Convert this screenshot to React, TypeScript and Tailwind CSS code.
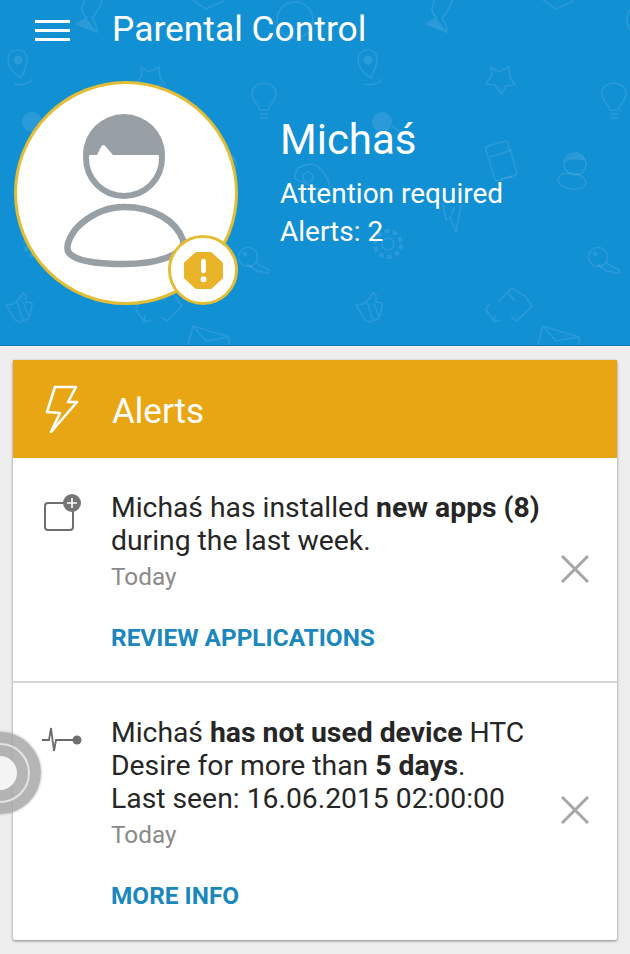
const Doodles = () => (
  <svg className="absolute inset-0" width="630" height="345" viewBox="0 0 630 345" fill="none" stroke="#fff" strokeOpacity="0.1" strokeWidth="1.6">
    <defs>
      {/* the wallpaper repeats every 350px */}
      <g id="tile">
        {/* hourglass */}
        <path d="M85 0l-3 8c-1 4 2 7 5 10-4 3-9 4-11 6l21 8c0-6-2-10-5-14 3-3 6-7 8-12l2-6" />
        <path d="M78 24l9-5 9 12z" fill="#fff" fillOpacity="0.1" stroke="none" />
        {/* pin */}
        <path d="M21 78c-7-4-13-11-13-19 0-7 6-9 10-9 6 0 9 4 9 10 0 6-3 12-6 18zM14 84c6 2 15 0 18-5" />
        <circle cx="18" cy="60" r="4.5" fill="#fff" fillOpacity="0.1" stroke="none" />
        {/* star */}
        <path d="M141 67l8 5 10-5 1 11 5 6-9 2-4 8-7-9-9-1 6-9z" />
        {/* bulb */}
        <path d="M260 110c-1-5-8-9-8-17 0-6 6-10 12-10s12 4 12 10c0 8-7 12-8 17zM260 114h8M260 118h8" />
        {/* face */}
        <circle cx="32" cy="122" r="10" fill="#fff" fillOpacity="0.1" stroke="none" />
        <path d="M42 126l10 7" />
        {/* gamepad */}
        <path d="M298 168c6-4 15-5 19-2 6 4 11 12 13 21l-3 3c-8 0-16-3-24-8-4-1-7-2-8-5 0-3 1-6 3-9z" />
        <circle cx="308" cy="177" r="5" />
        {/* phone */}
        <rect x="0" y="0" width="23" height="36" rx="3" transform="translate(135 147) rotate(-17)" />
        <path d="M140 157l22-7M151 179l11-3" />
        {/* user */}
        <circle cx="225" cy="164" r="11" />
        <path d="M215 162c2-9 18-11 20-1-6-2-14-2-20 1z" fill="#fff" fillOpacity="0.1" stroke="none" />
        <ellipse cx="222" cy="181" rx="14" ry="8" transform="rotate(10 222 181)" />
        {/* bolt */}
        <path d="M111 205l-5 27-6-15-4 3-3-17M104 207l-2 8" />
        {/* gear */}
        <circle cx="38" cy="244" r="6" />
        <circle cx="38" cy="244" r="13" strokeDasharray="5 3.2" strokeWidth="4" />
        {/* key */}
        <circle cx="248" cy="257" r="9.5" />
        <circle cx="245" cy="254" r="1.6" />
        <path d="M256 263l13 7v3h-5l-3-2-3 1-11-8" />
        {/* thumb */}
        <path d="M6 305l7-1 7-6 3-5 3 2v7l6 1-1 9-3 7-9 3-4-2z" />
        <path d="M17 302l6 18M23 302l6 14" />
        {/* arrow square */}
        <path d="M148 302l14-14 13 8 7 10-15 15-6-4M159 294l6 7" />
        <path d="M139 304c-2 3-3 5-3 6 3 5 6 8 9 12M145 315l-1 7 7-2" />
        {/* envelope */}
        <path d="M193 0l13 9 16-7 1-2" />
        <path d="M188 345l5-19 36 11 0 8M193 326l13 15 23-4" />
        {/* ring */}
        <circle cx="295" cy="20" r="18" />
      </g>
    </defs>
    <use href="#tile" />
    <use href="#tile" x="350" />
  </svg>
)

const Avatar = () => (
  <div className="relative h-[224px] w-[224px] shrink-0">
    <div className="h-full w-full rounded-full border-[3px] border-[#e2bd36] bg-white">
      <svg width="218" height="218" viewBox="3 3 218 218" fill="none">
        <circle cx="110" cy="77" r="38" stroke="#98a0a5" strokeWidth="6" fill="#fff" />
        <path d="M69 74A41 41 0 0 1 151 74H99L92 66Q89 62 87 66L83 74Z" fill="#98a0a5" />
        <path d="M110 126C140 126 162 140 169 159C172 175 140 183 110 183C85 183 62 180 55 172C50 165 58 150 68 142C80 132 95 126 110 126Z" stroke="#98a0a5" strokeWidth="6.5" fill="#fff" />
      </svg>
    </div>
    <div className="absolute bottom-0 right-0 flex h-[70px] w-[70px] items-center justify-center rounded-full border-[3px] border-[#e2bd36] bg-white">
      <svg width="39" height="37" viewBox="0 0 40 38">
        <path d="M12 0h16l12 11v16L28 38H12L0 27V11z" fill="#e9b32a" />
        <rect x="17.5" y="7" width="5" height="15" rx="2.5" fill="#fff" />
        <circle cx="20" cy="28" r="3" fill="#fff" />
      </svg>
    </div>
  </div>
)

function AppIcon() {
  return (
    <svg width="38" height="38" viewBox="0 0 38 38" fill="none">
      <rect x="1" y="10" width="28" height="27" rx="3" stroke="#6f6f6f" strokeWidth="2" />
      <circle cx="28" cy="10" r="9" fill="#757575" />
      <path d="M28 5v10M23 10h10" stroke="#fff" strokeWidth="1.6" />
    </svg>
  )
}

function PulseIcon() {
  return (
    <svg width="40" height="26" viewBox="0 0 40 26" fill="none">
      <path d="M0 13h7L9 1l3 23 2-11h20" stroke="#6a6a6a" strokeWidth="1.8" />
      <circle cx="35" cy="13" r="4.5" fill="#6f6f6f" />
    </svg>
  )
}

function CloseIcon() {
  return (
    <svg width="28" height="28" viewBox="0 0 28 28" fill="none" stroke="#a6a6a6" strokeWidth="3">
      <path d="M1 1l26 26M27 1L1 27" />
    </svg>
  )
}

export default function App() {
  return (
    <div className="relative h-[954px] w-[630px] overflow-hidden bg-[#eeeeee] font-['Roboto',sans-serif]">
      <header className="relative h-[346px] border-b border-[#1079b3] bg-[#1290d4]">
        <Doodles />
        <div className="relative flex h-[60px] items-center pl-[35px]">
          <div className="flex w-[77px] flex-col gap-[6px]">
            <span className="h-[3px] w-[35px] bg-white" />
            <span className="h-[3px] w-[35px] bg-white" />
            <span className="h-[3px] w-[35px] bg-white" />
          </div>
          <h1 className="text-[35.4px] leading-none text-white">Parental Control</h1>
        </div>
        <div className="relative mt-[21px] flex pl-[14px]">
          <Avatar />
          <div className="ml-[42px] text-white">
            <h2 className="mt-[34px] text-[42px] leading-[50px]">Michaś</h2>
            <p className="mt-[10px] text-[28px] leading-[38px]">Attention required</p>
            <p className="text-[28px] leading-[38px]">Alerts: 2</p>
          </div>
        </div>
      </header>

      <section className="mx-[13px] mt-[14px] rounded-[2px] bg-white shadow-[0_1px_3px_rgba(0,0,0,0.45)]">
        <div className="flex h-[98px] items-center bg-[#e8a615] pl-[32px]">
          <svg width="34" height="48" viewBox="0 0 34 48" fill="none" stroke="#fff" strokeWidth="2.6" strokeLinejoin="round">
            <path d="M10 2H31L23 17H32L6 47L15 28L2 27Z" />
          </svg>
          <span className="ml-[33px] pt-[7px] text-[35px] text-white">Alerts</span>
        </div>

        <article className="relative h-[225px] border-b-2 border-[#d5d5d5] pl-[98px] pt-[33px]">
          <div className="absolute left-[31px] top-[35px]"><AppIcon /></div>
          <p className="text-[28.3px] leading-[33px] text-[#262626]">
            Michaś has installed <b className="font-bold">new apps (8)</b>
            <br />during the last week.
          </p>
          <p className="mt-[4px] text-[24.3px] leading-[32px] text-[#8a8a8a]">Today</p>
          <p className="mt-[29px] text-[24.4px] font-bold leading-[32px] text-[#1a87bd]">REVIEW APPLICATIONS</p>
          <div className="absolute right-[28px] top-[97px]"><CloseIcon /></div>
        </article>

        <article className="relative h-[257px] pl-[98px] pt-[33px]">
          <div className="absolute left-[29px] top-[44px]"><PulseIcon /></div>
          <p className="text-[28.3px] leading-[33px] text-[#262626]">
            Michaś <b className="font-bold">has not used device</b> HTC
            <br />Desire for more than <b className="font-bold">5 days</b>.
            <br />Last seen: 16.06.2015 02:00:00
          </p>
          <p className="mt-[4px] text-[24.3px] leading-[32px] text-[#8a8a8a]">Today</p>
          <p className="mt-[29px] text-[24.4px] font-bold leading-[32px] text-[#1a87bd]">MORE INFO</p>
          <div className="absolute right-[28px] top-[113px]"><CloseIcon /></div>
        </article>
      </section>

      {/* floating assistive ring lying over the card */}
      <div className="absolute left-[-41px] top-[732px] flex h-[82px] w-[82px] items-center justify-center rounded-full bg-[#a8a8a8]/85 shadow-[0_0_3px_rgba(0,0,0,0.3)]">
        <div className="flex h-[60px] w-[60px] items-center justify-center rounded-full border-2 border-[#e4e4e4]">
          <div className="h-[34px] w-[34px] rounded-full bg-[#f4f4f4]" />
        </div>
      </div>
    </div>
  )
}
